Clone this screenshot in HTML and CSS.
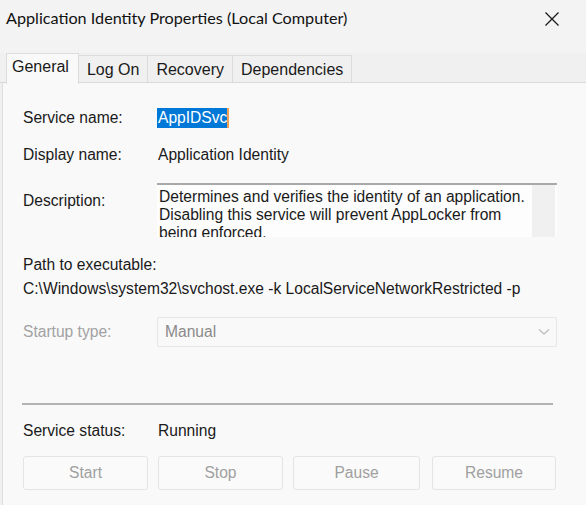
FILE: index.html
```html
<!DOCTYPE html>
<html lang="en">
  <head>
    <meta charset="UTF-8" />
    <title>Application Identity Properties</title>
    <link rel="stylesheet" href="styles.css">
  </head>
  <body>
    <div class="window">
      <div class="titlebar">
        <span class="title">Application Identity Properties (Local Computer)</span>
        <svg class="close" viewBox="0 0 16 16" width="16" height="16">
          <path d="M1.5 1.5 L14.5 14.5 M14.5 1.5 L1.5 14.5" stroke="#1a1a1a" stroke-width="1.3" fill="none" />
        </svg>
      </div>

      <div class="tabs">
        <div class="tab active">General</div>
        <div class="tab">Log On</div>
        <div class="tab">Recovery</div>
        <div class="tab">Dependencies</div>
      </div>

      <div class="panel">
        <div class="row first">
          <span class="label">Service name:</span>
          <span class="value"><span class="selected">AppIDSvc</span><span class="caret"></span></span>
        </div>
        <div class="row gap16">
          <span class="label">Display name:</span>
          <span class="value">Application Identity</span>
        </div>
        <div class="row desc">
          <span class="label desc-label">Description:</span>
          <div class="textbox">
            <div class="textbox-text">Determines and verifies the identity of an application. Disabling this service will prevent AppLocker from being enforced.</div>
            <div class="scrollbar"></div>
          </div>
        </div>
        <div class="path-label">Path to executable:</div>
        <div class="path-value">C:\Windows\system32\svchost.exe -k LocalServiceNetworkRestricted -p</div>
        <div class="row startup">
          <span class="label disabled">Startup type:</span>
          <div class="combo">
            <span>Manual</span>
            <svg class="chevron" viewBox="0 0 12 8" width="12" height="8">
              <path d="M1 1.5 L6 6 L11 1.5" stroke="#b8b8b8" stroke-width="1.1" fill="none" />
            </svg>
          </div>
        </div>
        <div class="separator"></div>
        <div class="row status">
          <span class="label">Service status:</span>
          <span class="value">Running</span>
        </div>
        <div class="buttons">
          <div class="btn b-start">Start</div>
          <div class="btn b-stop">Stop</div>
          <div class="btn b-pause">Pause</div>
          <div class="btn b-resume">Resume</div>
        </div>
      </div>
    </div>
  </body>
</html>
```

FILE: styles.css
```css
body {
  margin: 0;
  background: #f0f0f0;
  font-family: "Liberation Sans", Arial, sans-serif;
  font-size: 15.6px;
  color: #1a1a1a;
}
.window {
  width: 586px;
  height: 505px;
  overflow: hidden;
  background: #f0f0f0;
}
.titlebar {
  height: 53px;
  display: flex;
  align-items: flex-start;
  justify-content: space-between;
  background: #f3f3f3;
}
.title {
  font-family: Lato, "Noto Sans", sans-serif;
  font-size: 16.2px;
  margin: 8px 0 0 6px;
  color: #111;
}
.close {
  margin: 11px 26px 0 0;
}
.tabs {
  display: flex;
  align-items: flex-end;
  height: 29px;
  padding-left: 6px;
  border-bottom: 1px solid #dadada;
  position: relative;
  z-index: 1;
  font-size: 16px;
}
.tab {
  height: 26px;
  line-height: 27px;
  padding: 0 8px;
  border: 1px solid #dcdcdc;
  border-bottom: none;
  border-left: none;
  background: #f0f0f0;
}
.tab.active {
  height: 30px;
  line-height: 26px;
  padding: 0 9px 0 5px;
  margin-bottom: -2px;
  border-left: 1px solid #dcdcdc;
  background: #f9f9f9;
}
.panel {
  margin-left: 2px;
  border-left: 1px solid #dedede;
  background: #f9f9f9;
  padding: 25px 0 0 20px;
  height: 420px;
}
.row {
  display: flex;
  align-items: center;
  line-height: 20px;
}
.label {
  width: 135px;
  flex: none;
}
.value {
  display: flex;
  align-items: center;
}
.selected {
  background: #0078d7;
  color: #fff;
  padding: 0 0 0 1px;
  margin-left: -1px;
}
.caret {
  width: 2px;
  height: 20px;
  background: #f0a050;
}
.gap16 {
  margin-top: 17px;
}
.desc {
  margin-top: 18px;
  align-items: flex-start;
}
.desc-label {
  margin-top: 8px;
}
.textbox {
  width: 400px;
  height: 52px;
  margin-left: -1px;
  border-top: 2px solid #a8a8a8;
  background: #fdfdfd;
  display: flex;
  overflow: hidden;
}
.textbox-text {
  flex: 1;
  padding: 3px 0 0 2px;
  line-height: 18px;
}
.scrollbar {
  width: 23px;
  background: #f0f0f0;
  margin-right: 2px;
}
.path-label {
  margin-top: 18px;
  line-height: 20px;
}
.path-value {
  margin-top: 4px;
  line-height: 20px;
}
.startup {
  margin-top: 18px;
}
.disabled {
  color: #a2a2a2;
}
.combo {
  width: 400px;
  height: 30px;
  margin-left: -1px;
  border: 1px solid #e6e6e6;
  border-radius: 2px;
  background: #f9f9f9;
  display: flex;
  align-items: center;
  justify-content: space-between;
  padding-left: 7px;
  box-sizing: border-box;
  color: #8a8a8a;
}
.chevron {
  margin-right: 6px;
}
.separator {
  margin-top: 56px;
  width: 531px;
  height: 2px;
  margin-left: -1px;
  background: #b2b2b2;
}
.status {
  margin-top: 16px;
}
.buttons {
  display: flex;
  margin-top: 15px;
}
.btn {
  height: 32px;
  line-height: 32px;
  text-align: center;
  border: 1px solid #e4e4e4;
  border-radius: 3px;
  background: #fafafa;
  color: #a0a0a0;
}
.b-start {
  width: 123px;
}
.b-stop {
  width: 123px;
  margin-left: 10px;
}
.b-pause {
  width: 125px;
  margin-left: 10px;
}
.b-resume {
  width: 122px;
  margin-left: 12px;
}
```
